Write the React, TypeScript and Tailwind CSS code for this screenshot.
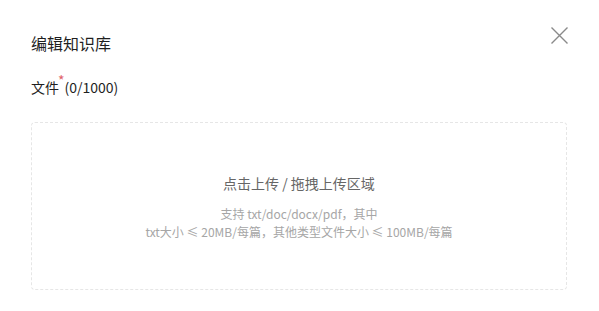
import React from "react";

export default function App() {
  return (
    <div
      className="w-[599px] h-[311px] bg-white relative overflow-hidden"
      style={{ fontFamily: '"Microsoft YaHei", "Noto Sans CJK SC", "Noto Sans", sans-serif' }}
    >
      <button className="absolute left-[549px] top-[25px] w-[21px] h-[21px] flex items-center justify-center">
        <svg width="19" height="19" viewBox="0 0 19 19" fill="none" stroke="#8a8a8a" strokeWidth="1.4">
          <path d="M1.5 1.5 L17.5 17.5 M17.5 1.5 L1.5 17.5" />
        </svg>
      </button>
      <div className="pl-[31px] pr-[32px] pt-[31px]">
        <div className="text-[16px] leading-[24px] text-[#1f1f1f]">编辑知识库</div>
        <div className="mt-[21px] flex items-start text-[14px] leading-[22px] text-[#1f1f1f]">
          <span>文件</span>
          <span className="text-[#e0626a] text-[14px] leading-[12px] mt-[-2px] ml-[-1px] mr-0">*</span>
          <span>(0/1000)</span>
        </div>
        <div className="mt-[24px] h-[168px] w-[536px] rounded-[4px] border border-dashed border-[#e6e6e6] flex flex-col items-center justify-center">
          <div className="text-[14px] leading-[20px] text-[#666666] mt-[1px]">点击上传 / 拖拽上传区域</div>
          <div className="mt-[12px] text-[12px] leading-[18px] text-[#a6a6a6] text-center">
            <div>支持 txt/doc/docx/pdf，其中</div>
            <div>txt大小 ≤ 20MB/每篇，其他类型文件大小 ≤ 100MB/每篇</div>
          </div>
        </div>
      </div>
    </div>
  );
}
